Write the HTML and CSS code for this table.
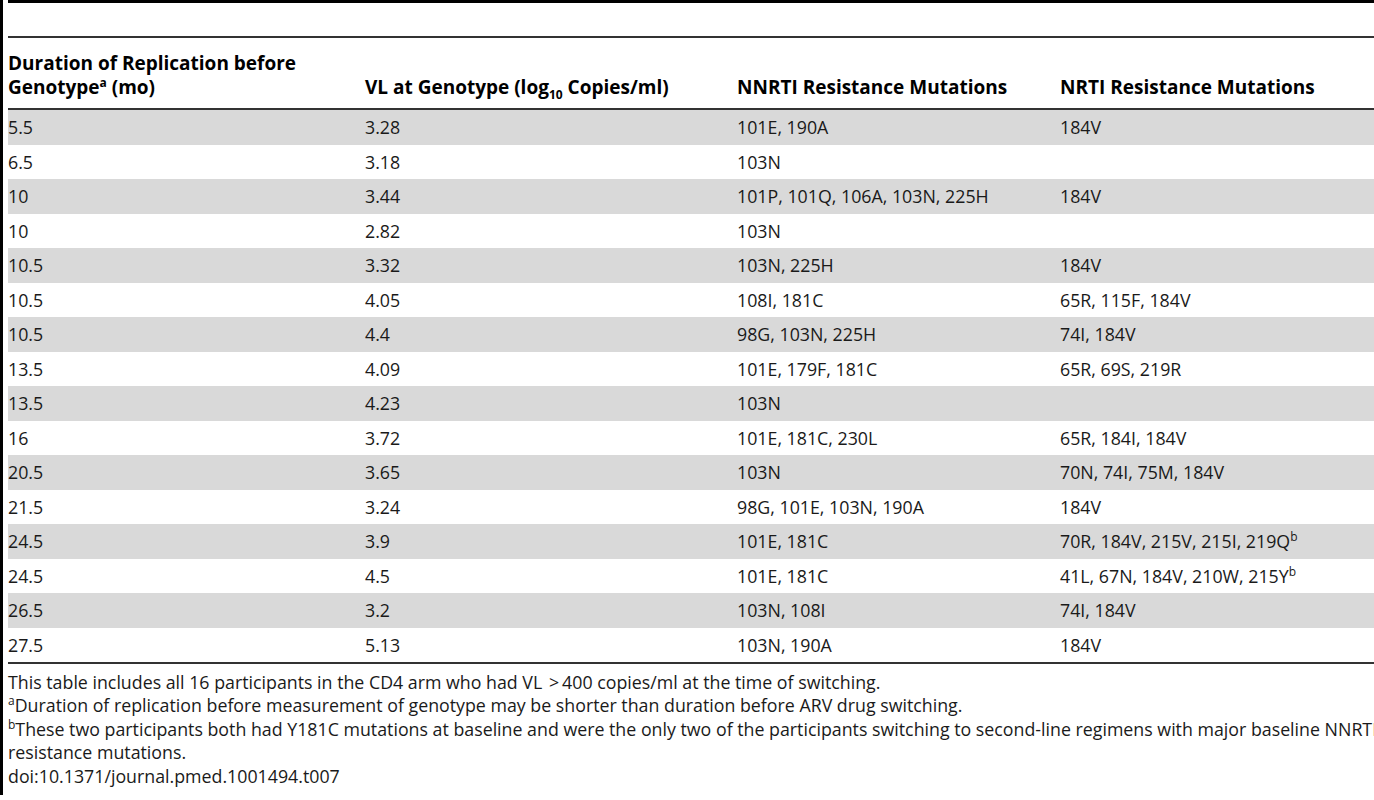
FILE: index.html
```html
<!DOCTYPE html>
<html lang="en">
<head>
  <meta charset="UTF-8" />
  <title>Table 7</title>
  <link rel="stylesheet" href="styles.css">
</head>
<body>
  <div class="frame">
    <div class="inner">
      <div class="caption-space"></div>
      <table class="data-table">
        <thead>
          <tr>
            <th class="col-dur">Duration of Replication before<br>Genotype<sup>a</sup> (mo)</th>
            <th class="col-vl">VL at Genotype (log<sub>10</sub> Copies/ml)</th>
            <th class="col-nnrti">NNRTI Resistance Mutations</th>
            <th>NRTI Resistance Mutations</th>
          </tr>
        </thead>
        <tbody>
          <tr><td>5.5</td><td>3.28</td><td>101E, 190A</td><td>184V</td></tr>
          <tr><td>6.5</td><td>3.18</td><td>103N</td><td></td></tr>
          <tr><td>10</td><td>3.44</td><td>101P, 101Q, 106A, 103N, 225H</td><td>184V</td></tr>
          <tr><td>10</td><td>2.82</td><td>103N</td><td></td></tr>
          <tr><td>10.5</td><td>3.32</td><td>103N, 225H</td><td>184V</td></tr>
          <tr><td>10.5</td><td>4.05</td><td>108I, 181C</td><td>65R, 115F, 184V</td></tr>
          <tr><td>10.5</td><td>4.4</td><td>98G, 103N, 225H</td><td>74I, 184V</td></tr>
          <tr><td>13.5</td><td>4.09</td><td>101E, 179F, 181C</td><td>65R, 69S, 219R</td></tr>
          <tr><td>13.5</td><td>4.23</td><td>103N</td><td></td></tr>
          <tr><td>16</td><td>3.72</td><td>101E, 181C, 230L</td><td>65R, 184I, 184V</td></tr>
          <tr><td>20.5</td><td>3.65</td><td>103N</td><td>70N, 74I, 75M, 184V</td></tr>
          <tr><td>21.5</td><td>3.24</td><td>98G, 101E, 103N, 190A</td><td>184V</td></tr>
          <tr><td>24.5</td><td>3.9</td><td>101E, 181C</td><td>70R, 184V, 215V, 215I, 219Q<sup>b</sup></td></tr>
          <tr><td>24.5</td><td>4.5</td><td>101E, 181C</td><td>41L, 67N, 184V, 210W, 215Y<sup>b</sup></td></tr>
          <tr><td>26.5</td><td>3.2</td><td>103N, 108I</td><td>74I, 184V</td></tr>
          <tr><td>27.5</td><td>5.13</td><td>103N, 190A</td><td>184V</td></tr>
        </tbody>
      </table>
      <div class="notes">
        <p>This table includes all 16 participants in the CD4 arm who had VL <span class="gt">&gt;</span>400 copies/ml at the time of switching.</p>
        <p><sup>a</sup>Duration of replication before measurement of genotype may be shorter than duration before ARV drug switching.</p>
        <p><sup>b</sup>These two participants both had Y181C mutations at baseline and were the only two of the participants switching to second-line regimens with major baseline NNRTI resistance mutations.</p>
        <p>doi:10.1371/journal.pmed.1001494.t007</p>
      </div>
    </div>
  </div>
</body>
</html>
```
FILE: styles.css
```css
body {
  margin: 0;
  padding: 0;
  font-family: "Open Sans", "Liberation Sans", sans-serif;
  font-size: 17.8px;
  color: #1a1a1a;
  background: #ffffff;
  overflow: hidden;
}

.frame {
  width: 1420px;
  height: 795px;
  border-left: 3px solid #000;
  padding-left: 5px;
}

.inner {
  border-top: 3px solid #000;
}

.caption-space {
  height: 33px;
}

.data-table {
  width: 100%;
  border-collapse: collapse;
  table-layout: fixed;
  border-top: 2px solid #333;
  border-bottom: 2px solid #333;
}

.data-table th {
  text-align: left;
  vertical-align: bottom;
  font-size: 19px;
  font-weight: bold;
  color: #000;
  line-height: 24px;
  padding: 13px 0 9px 0;
  border-bottom: 2px solid #333;
}

.data-table td {
  height: 34.5px;
  padding: 0;
  line-height: 22px;
  vertical-align: middle;
  white-space: nowrap;
}

.data-table tbody tr:nth-child(odd) {
  background: #d9d9d9;
}

.col-dur {
  width: 357px;
}

.col-vl {
  width: 372px;
}

.col-nnrti {
  width: 323px;
}

sup, sub {
  font-size: 12px;
  line-height: 0;
}

.notes {
  padding-top: 7px;
  line-height: 23.4px;
}

.notes p {
  margin: 0;
}

.gt {
  margin: 0 3px 0 2px;
}
```
